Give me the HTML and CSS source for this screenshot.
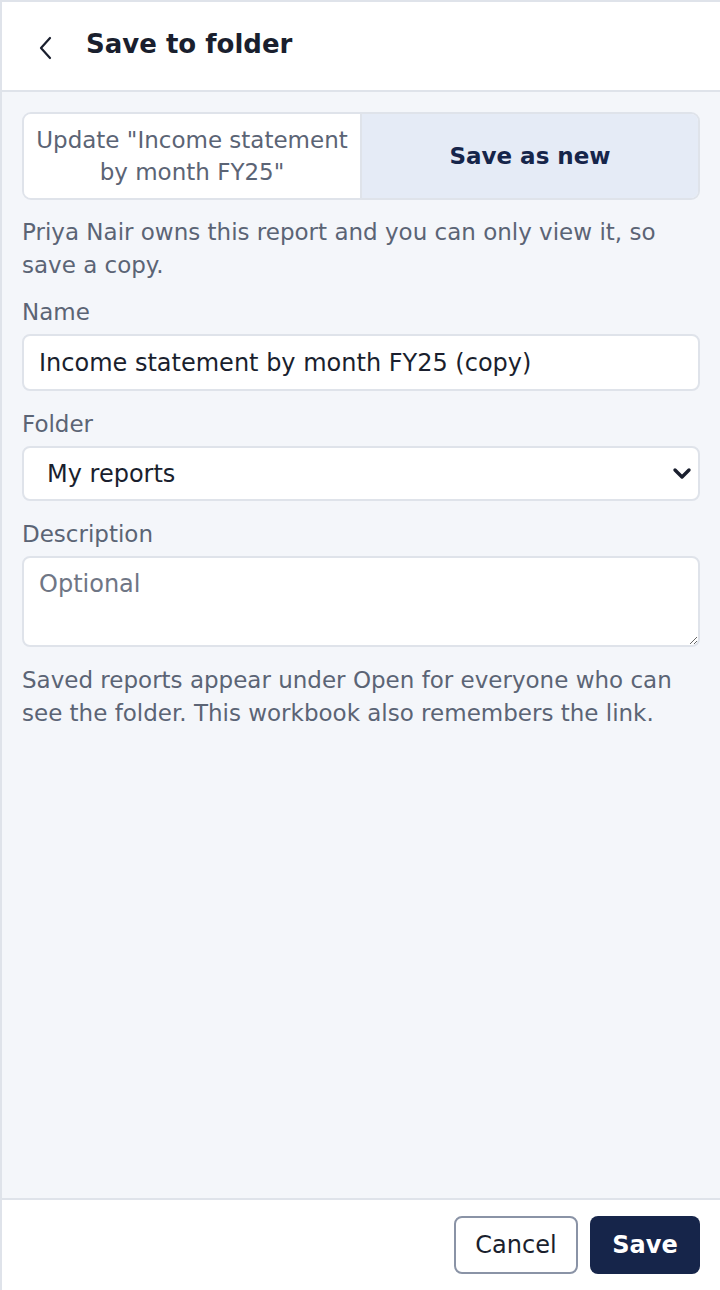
FILE: index.html
```html
<!DOCTYPE html>
<html lang="en">
<head>
    <meta charset="UTF-8">
    <meta name="viewport" content="width=device-width, initial-scale=1.0">
    <title>Save to folder</title>
    <link rel="stylesheet" href="styles.css">
</head>
<body>

<div class="panel">
    <!-- Header -->
    <div class="header">
        <button class="back" aria-label="Back">
            <svg width="20" height="24" viewBox="0 0 20 24"><path d="M14 2 L5 12 L14 22" fill="none" stroke="#1a1f2e" stroke-width="2.2" stroke-linecap="round" stroke-linejoin="round"/></svg>
        </button>
        <h1>Save to folder</h1>
    </div>

    <!-- Body -->
    <div class="content">
        <div class="segmented">
            <button class="seg">Update "Income statement by month FY25"</button>
            <button class="seg active">Save as new</button>
        </div>

        <p class="note">Priya Nair owns this report and you can only view it, so save a copy.</p>

        <label class="field-label" for="name">Name</label>
        <input type="text" id="name" class="field" value="Income statement by month FY25 (copy)">

        <label class="field-label" for="folder">Folder</label>
        <div class="select-wrap">
            <select id="folder" class="field select">
                <option>My reports</option>
                <option>Shared reports</option>
            </select>
            <svg class="chev" width="20" height="14" viewBox="0 0 20 14"><path d="M3 3 L10 10 L17 3" fill="none" stroke="#1a1f2e" stroke-width="3.4" stroke-linecap="round" stroke-linejoin="round"/></svg>
        </div>

        <label class="field-label" for="desc">Description</label>
        <textarea id="desc" class="field area" placeholder="Optional"></textarea>

        <p class="note">Saved reports appear under Open for everyone who can see the folder. This workbook also remembers the link.</p>
    </div>

    <!-- Footer -->
    <div class="footer">
        <button class="btn cancel">Cancel</button>
        <button class="btn save">Save</button>
    </div>
</div>

</body>
</html>
```

FILE: styles.css
```css
* {
    margin: 0;
    padding: 0;
    box-sizing: border-box;
    font-family: "DejaVu Sans", sans-serif;
}
body {
    background: #f4f6fa;
    color: #1a1f2e;
}
.panel {
    display: flex;
    flex-direction: column;
    height: 100vh;
    border-top: 2px solid #dfe3ea;
    border-left: 2px solid #dfe3ea;
    background: #f4f6fa;
}
.header {
    display: flex;
    align-items: center;
    gap: 30px;
    height: 90px;
    padding: 0 0 0 34px;
    background: white;
    border-bottom: 2px solid #dfe3ea;
    flex-shrink: 0;
}
.back {
    background: none;
    border: none;
    display: flex;
    align-items: center;
    cursor: pointer;
    margin-top: 4px;
}
h1 {
    font-size: 26px;
    font-weight: bold;
    color: #1a1f2e;
    margin-bottom: 4px;
}
.content {
    flex: 1;
    padding: 20px 20px 0 20px;
}
.segmented {
    display: flex;
    height: 88px;
    border: 2px solid #dfe3ea;
    border-radius: 9px;
    overflow: hidden;
    margin-bottom: 16px;
}
.seg {
    flex: 1;
    border: none;
    background: white;
    color: #5b6475;
    font-size: 23px;
    line-height: 32px;
    padding: 0 10px;
    cursor: pointer;
}
.seg.active {
    background: #e5ebf6;
    color: #16254a;
    font-weight: bold;
    border-left: 2px solid #dfe3ea;
}
.note {
    font-size: 23px;
    line-height: 33px;
    color: #5b6475;
}
.field-label {
    display: block;
    font-size: 23px;
    line-height: 28px;
    color: #5b6475;
    margin: 19px 0 8px;
}
.note + .field-label {
    margin-top: 16px;
}
.field {
    display: block;
    width: 100%;
    background: white;
    border: 2px solid #dfe3ea;
    border-radius: 8px;
    font-size: 24px;
    color: #1a1f2e;
    outline: none;
}
input.field {
    height: 57px;
    padding: 0 15px;
}
.select-wrap {
    position: relative;
}
.select {
    height: 55px;
    padding: 0 23px;
    appearance: none;
    -webkit-appearance: none;
}
.chev {
    position: absolute;
    right: 8px;
    top: 21px;
    pointer-events: none;
}
.area {
    height: 91px;
    padding: 12px 15px;
    resize: vertical;
    margin-bottom: 17px;
}
.area::placeholder {
    color: #6f7685;
}
.footer {
    display: flex;
    justify-content: flex-end;
    gap: 12px;
    padding: 16px 20px 16px;
    background: white;
    border-top: 2px solid #dfe3ea;
    flex-shrink: 0;
}
.btn {
    height: 58px;
    border-radius: 8px;
    font-size: 24px;
    cursor: pointer;
}
.cancel {
    width: 124px;
    background: white;
    border: 2px solid #8a93a6;
    color: #1a1f2e;
}
.save {
    width: 110px;
    background: #16254a;
    border: none;
    color: white;
    font-weight: bold;
}
```
